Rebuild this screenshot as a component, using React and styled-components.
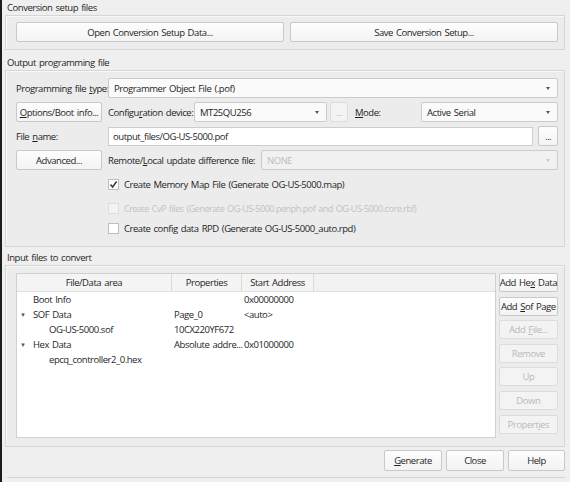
import React from 'react'
import styled, { createGlobalStyle, css } from 'styled-components'

const GlobalStyle = createGlobalStyle`
  html, body {
    margin: 0;
    padding: 0;
    background: #efefef;
  }
  body {
    font-family: "Open Sans", "Noto Sans", sans-serif;
    font-size: 9.5px;
    letter-spacing: -0.45px;
    word-spacing: 1px;
    color: #1f1f1f;
  }
`

const Window = styled.div`
  width: 570px;
  height: 482px;
  box-sizing: border-box;
  border-left: 2px solid #1c1c1c;
  padding: 0 5px 0 3px;
  display: flex;
  flex-direction: column;
  overflow: hidden;
`

const Title = styled.div`
  height: 15px;
  line-height: 15px;
  padding-left: 2px;
  margin-top: ${p => p.$top || 0}px;
`

const Group = styled.div`
  border: 1px solid #d6d6d6;
  box-shadow: inset 1px 1px 0 #f8f8f8;
  background: #ececec;
  padding: ${p => p.$pad};
  display: flex;
  flex-direction: column;
`

const Row = styled.div`
  display: flex;
  align-items: center;
  height: ${p => p.$h || 20}px;
  margin-top: ${p => p.$mt || 0}px;
`

const Label = styled.div`
  width: ${p => p.$w}px;
  flex: none;
  white-space: nowrap;
`

const Button = styled.div`
  box-sizing: border-box;
  height: ${p => p.$h || 20}px;
  width: ${p => (p.$w ? p.$w + 'px' : 'auto')};
  flex: ${p => (p.$grow ? 1 : 'none')};
  border: 1px solid #c9c9c9;
  border-radius: 2px;
  background: linear-gradient(#fdfdfd, #f3f3f3);
  display: flex;
  align-items: center;
  justify-content: center;
  white-space: nowrap;
  margin-right: ${p => p.$mr || 0}px;
  ${p => p.$disabled && css`
    color: #b9b9b9;
    border-color: #dcdcdc;
    background: #f3f3f3;
  `}
  u { text-decoration: underline; text-underline-offset: 1px; }
`

const Combo = styled.div`
  box-sizing: border-box;
  height: 20px;
  width: ${p => (p.$w ? p.$w + 'px' : 'auto')};
  flex: ${p => (p.$w ? 'none' : 1)};
  border: 1px solid #cbcbcb;
  border-radius: 2px;
  background: ${p => (p.$disabled ? '#f1f1f1' : '#fafafa')};
  color: ${p => (p.$disabled ? '#bdbdbd' : 'inherit')};
  display: flex;
  align-items: center;
  padding: 0 7px 0 5px;
  margin-right: ${p => p.$mr || 0}px;
  span { flex: 1; }
  &::after {
    content: '';
    border-left: 2.5px solid transparent;
    border-right: 2.5px solid transparent;
    border-top: 3px solid ${p => (p.$disabled ? '#c8c8c8' : '#555')};
  }
`

const Input = styled.div`
  box-sizing: border-box;
  height: 19px;
  flex: 1;
  border: 1px solid #cdcdcd;
  background: #fff;
  display: flex;
  align-items: center;
  padding: 0 4px;
  margin-right: 5px;
`

const CheckRow = styled.div`
  display: flex;
  align-items: center;
  padding-left: 92px;
  height: 20px;
  margin-top: ${p => p.$mt || 0}px;
  color: ${p => (p.$disabled ? '#c2c2c2' : 'inherit')};
  font-size: ${p => (p.$disabled ? '9px' : 'inherit')};
`

const Box = styled.div`
  width: 11px;
  height: 11px;
  box-sizing: border-box;
  border: 1px solid ${p => (p.$disabled ? '#dedede' : '#bdbdbd')};
  background: ${p => (p.$disabled ? '#f3f3f3' : '#fff')};
  margin-right: 5px;
  display: flex;
  align-items: center;
  justify-content: center;
  flex: none;
  svg { display: block; }
`

const Split = styled.div`
  display: flex;
  flex: 1;
`

const Table = styled.div`
  width: 482px;
  height: 165px;
  box-sizing: border-box;
  border: 1px solid #d0d0d0;
  background: #fff;
  margin-right: 3px;
`

const Header = styled.div`
  display: flex;
  height: 17px;
  background: #f2f2f2;
  border-bottom: 1px solid #e0e0e0;
`

const HeadCell = styled.div`
  width: ${p => p.$w}px;
  box-sizing: border-box;
  border-right: 1px solid #dadada;
  background: #f4f4f4;
  display: flex;
  align-items: center;
  justify-content: center;
`

const TRow = styled.div`
  display: flex;
  height: 15px;
  align-items: center;
  &:first-of-type { margin-top: 2px; }
`

const Cell = styled.div`
  width: ${p => p.$w}px;
  box-sizing: border-box;
  padding-left: ${p => p.$pl || 2}px;
  white-space: nowrap;
  display: flex;
  align-items: center;
`

const Arrow = styled.span`
  width: 13px;
  font-size: 6px;
  color: #555;
`

const SideButtons = styled.div`
  display: flex;
  flex-direction: column;
  gap: 4.6px;
  flex: 1;
`

const Footer = styled.div`
  display: flex;
  justify-content: flex-end;
  gap: 4px;
  padding: 3px 0 0;
  height: 21px;
`

const BottomLine = styled.div`
  margin-top: 6px;
  border-top: 1px solid #d4d4d4;
  margin-left: 2px;
`

const Check = () => (
  <svg width="9" height="9" viewBox="0 0 9 9">
    <path d="M1.5 4.5 L3.6 7 L7.6 1.5" fill="none" stroke="#333" strokeWidth="1.4" />
  </svg>
)

const tree = [
  { a: 'Boot Info', p: '', s: '0x00000000', lvl: 0 },
  { a: 'SOF Data', p: 'Page_0', s: '<auto>', lvl: 0, open: true },
  { a: 'OG-US-5000.sof', p: '10CX220YF672', s: '', lvl: 1 },
  { a: 'Hex Data', p: 'Absolute addre...', s: '0x01000000', lvl: 0, open: true },
  { a: 'epcq_controller2_0.hex', p: '', s: '', lvl: 1 },
]

export default function App() {
  return (
    <Window>
      <GlobalStyle />
      <Title>Conversion setup files</Title>
      <Group $pad="6px 6px 7px 10px">
        <Row>
          <Button $grow $mr={6}>Open Conversion Setup Data...</Button>
          <Button $grow>Save Conversion Setup...</Button>
        </Row>
      </Group>

      <Title $top={5}>Output programming file</Title>
      <Group $pad="7px 6px 8px 10px">
        <Row>
          <Label $w={92}>Programming file <u>t</u>ype:</Label>
          <Combo><span>Programmer Object File (.pof)</span></Combo>
        </Row>
        <Row $mt={4}>
          <Button $w={86} $mr={6}><span><u>O</u>ptions/Boot info...</span></Button>
          <Label $w={86}>Configu<u>r</u>ation device:</Label>
          <Combo $w={133} $mr={3}><span>MT25QU256</span></Combo>
          <Button $w={18} $mr={7} $disabled>...</Button>
          <Label $w={66}><u>M</u>ode:</Label>
          <Combo><span>Active Serial</span></Combo>
        </Row>
        <Row $mt={4}>
          <Label $w={92}>File <u>n</u>ame:</Label>
          <Input>output_files/OG-US-5000.pof</Input>
          <Button $w={20}>...</Button>
        </Row>
        <Row $mt={4}>
          <Button $w={86} $mr={6}>Advanced...</Button>
          <Label $w={153}>Remote/<u>L</u>ocal update difference file:</Label>
          <Combo $disabled><span>NONE</span></Combo>
        </Row>
        <CheckRow $mt={4}>
          <Box><Check /></Box>
          <span>Create Memory Map File (Generate OG-US-5000.map)</span>
        </CheckRow>
        <CheckRow $mt={4} $disabled>
          <Box $disabled />
          <span>Create CvP files (Generate OG-US-5000.periph.pof and OG-US-5000.core.rbf)</span>
        </CheckRow>
        <CheckRow $mt={0}>
          <Box />
          <span>Create config data RPD (Generate OG-US-5000_auto.rpd)</span>
        </CheckRow>
      </Group>

      <Title $top={3}>Input files to convert</Title>
      <Group $pad="7px 6px 8px 10px">
        <Split>
          <Table>
            <Header>
              <HeadCell $w={155}>File/Data area</HeadCell>
              <HeadCell $w={70}>Properties</HeadCell>
              <HeadCell $w={72}>Start Address</HeadCell>
            </Header>
            {tree.map(r => (
              <TRow key={r.a}>
                <Cell $w={155} $pl={r.lvl ? 32 : 3}>
                  {!r.lvl && <Arrow>{r.open ? '▼' : ''}</Arrow>}
                  <span>{r.a}</span>
                </Cell>
                <Cell $w={70}>{r.p}</Cell>
                <Cell $w={90}>{r.s}</Cell>
              </TRow>
            ))}
          </Table>
          <SideButtons>
            <Button $h={19}><span>Add He<u>x</u> Data</span></Button>
            <Button $h={19}><span>Add <u>S</u>of Page</span></Button>
            <Button $h={19} $disabled><span>Add <u>F</u>ile...</span></Button>
            <Button $h={19} $disabled>Remove</Button>
            <Button $h={19} $disabled>Up</Button>
            <Button $h={19} $disabled>Down</Button>
            <Button $h={19} $disabled><span>Propert<u>i</u>es</span></Button>
          </SideButtons>
        </Split>
      </Group>

      <Footer>
        <Button $w={58} $h={21}><span><u>G</u>enerate</span></Button>
        <Button $w={58} $h={21}>Close</Button>
        <Button $w={57} $h={21}>Help</Button>
      </Footer>
      <BottomLine />
    </Window>
  )
}
